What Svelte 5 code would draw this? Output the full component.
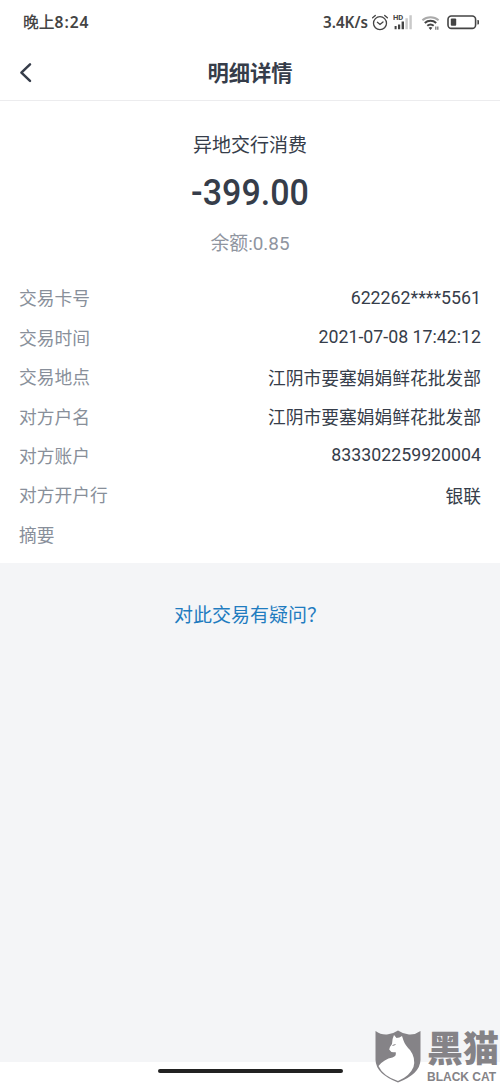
<script>
  const rows = [
    { label: '交易卡号', value: '622262****5561' },
    { label: '交易时间', value: '2021-07-08 17:42:12' },
    { label: '交易地点', value: '江阴市要塞娟娟鲜花批发部' },
    { label: '对方户名', value: '江阴市要塞娟娟鲜花批发部' },
    { label: '对方账户', value: '833302259920004' },
    { label: '对方开户行', value: '银联' },
    { label: '摘要', value: '' }
  ];
</script>

<div class="page">
  <div class="status">
    <div class="time">晚上<span>8:24</span></div>
    <div class="right">
      <span class="speed">3.4K/s</span>
      <svg class="alarm" width="18" height="18" viewBox="0 0 18 18" fill="none" stroke="#444" stroke-width="1.3" stroke-linecap="round">
        <circle cx="9" cy="9.2" r="6.5" />
        <path d="M1.6 3.8 4.3 1.5M16.4 3.8 13.7 1.5M6.4 8.3 9 10.5 12 7.9" />
      </svg>
      <svg class="signal" width="20" height="17" viewBox="0 0 20 17">
        <text x="0" y="6.3" font-size="7.6" font-weight="700" fill="#444">HD</text>
        <path d="M1.6 12h2v3.2h-2zM5 10.4h2.2v4.8H5zM8.6 7.6h2.4v7.6H8.6z" fill="#444" />
        <path d="M12.4 4.2h2.4v11h-2.4zM16.4 1.2h2.4v14h-2.4z" fill="#c9c9c9" />
      </svg>
      <svg class="wifi" width="20" height="16" viewBox="0 0 20 16" fill="none" stroke-width="2">
        <path d="M1.4 5.2a12.4 12.4 0 0 1 16.2 0" stroke="#aaa" />
        <path d="M3.8 8a8.6 8.6 0 0 1 11.4 0M6.3 10.8a5 5 0 0 1 6.4 0" stroke="#444" />
        <path d="M7.6 12.7 9.5 15l1.900-2.300a3 3 0 0 0-3.800 0z" fill="#444" stroke="none" />
        <path d="M14.800 11.600v3.200M16.800 11.600v3.200" stroke="#777" stroke-width="1.3" />
      </svg>
      <svg class="battery" width="33" height="15" viewBox="0 0 33 15">
        <rect x="1" y="1" width="27.6" height="12.4" rx="3.4" fill="none" stroke="#444" stroke-width="1.6" />
        <rect x="3.8" y="3.6" width="5.4" height="7.2" rx="1" fill="#444" />
        <path d="M30.4 5h.6q1 0 1 1v2.4q0 1-1 1h-.6z" fill="#444" />
      </svg>
    </div>
  </div>

  <header>
    <button class="back" aria-label="返回">
      <svg width="14" height="22" viewBox="0 0 14 22" fill="none" stroke="#363d4a" stroke-width="2.5" stroke-linecap="round" stroke-linejoin="round">
        <path d="M11 2.300 2.400 10.600 11 18.900" />
      </svg>
    </button>
    <h1>明细详情</h1>
  </header>

  <section class="summary">
    <div class="kind">异地交行消费</div>
    <div class="amount">-399.00</div>
    <div class="balance">余额:0.85</div>
  </section>

  <section class="details">
    {#each rows as row}
      <div class="row">
        <span class="label">{row.label}</span>
        <span class="value">{row.value}</span>
      </div>
    {/each}
  </section>

  <main>
    <a href="#question">对此交易有疑问？</a>
  </main>

  <footer><div class="home"></div></footer>

  <div class="watermark">
    <svg width="46" height="54" viewBox="0 0 46 54">
      <path d="M.5 1Q6 5 12 4.500 18 4 23 .5 28 4 34 4.500 40 5 45.500 1V30Q45 44 23 52.500 1 44 .5 30Z" fill="#858387" />
      <path d="M19 5 21.500 8Q24.500 8 27 6L28.500 10.500Q30 15 35 20 41 28 38.500 37 35 46 23 51 8 46 3.500 36 9 29 17.500 27.500 22 26 20.500 22 16 23 14.200 19.500 14.500 17 17 14 17 9 19 5Z" fill="#fff" />
      <path d="M17.500 15.500 20.500 14.500" stroke="#858387" stroke-width="1" />
    </svg>
    <div class="brand">
      <div class="cn">黑猫</div>
      <div class="en">BLACK CAT</div>
    </div>
  </div>
</div>

<style>
  :global(body) {
    margin: 0;
    background: #fff;
  }

  .page {
    position: relative;
    display: flex;
    flex-direction: column;
    width: 500px;
    height: 1083px;
    overflow: hidden;
    background: #fff;
    color: #363d4a;
    font-family: Roboto, 'Noto Sans CJK SC', sans-serif;
  }

  .status {
    display: flex;
    justify-content: space-between;
    align-items: center;
    box-sizing: border-box;
    height: 45px;
    padding: 0 20px 0 23px;
    color: #444;
  }

  .time {
    font-size: 15.8px;
    font-weight: 500;
    line-height: 20px;
  }

  .time span {
    font-family: 'Noto Sans', sans-serif;
    font-size: 15.6px;
    font-weight: 600;
    letter-spacing: 0.9px;
  }

  .right {
    display: flex;
    align-items: center;
  }

  .speed {
    margin: -2px 3px 0 0;
    font-family: 'Noto Sans', sans-serif;
    font-size: 15.2px;
    font-weight: 600;
    line-height: 20px;
  }

  .signal {
    margin-left: 4px;
  }

  .wifi {
    margin-left: 8px;
  }

  .battery {
    margin-left: 6px;
  }

  header {
    display: grid;
    grid-template-columns: 60px 1fr 60px;
    align-items: center;
    box-sizing: border-box;
    height: 56px;
    border-bottom: 1px solid #ececee;
  }

  .back {
    display: flex;
    padding: 0 0 0 19px;
    border: 0;
    background: none;
  }

  h1 {
    margin: 0;
    padding-top: 2px;
    font-size: 21.3px;
    font-weight: 700;
    line-height: 32px;
    text-align: center;
  }

  .summary {
    display: flex;
    flex-direction: column;
    align-items: center;
    padding-top: 31px;
  }

  .kind {
    font-size: 19px;
    line-height: 28px;
  }

  .amount {
    margin-top: 11px;
    font-size: 37px;
    font-weight: 500;
    line-height: 44px;
    transform: scaleX(0.92);
  }

  .balance {
    margin-top: 15px;
    color: #8f959f;
    font-size: 18.9px;
    line-height: 28px;
  }

  .details {
    padding: 20px 19px 9px;
  }

  .row {
    display: flex;
    justify-content: space-between;
    align-items: center;
    height: 39.45px;
    font-size: 17.75px;
  }

  .label {
    padding-bottom: 1px;
    color: #888f9a;
  }

  main {
    flex: 1;
    padding-top: 38px;
    background: #f4f5f7;
    text-align: center;
  }

  a {
    color: #1f7cc0;
    font-size: 19px;
    line-height: 30px;
    text-decoration: none;
  }

  footer {
    display: flex;
    justify-content: center;
    box-sizing: border-box;
    height: 21px;
    padding-top: 7px;
  }

  .home {
    width: 185px;
    height: 4px;
    border-radius: 2px;
    background: #222;
  }

  /* stamped over the page corner */
  .watermark {
    position: absolute;
    right: -3px;
    bottom: -1px;
    display: flex;
    gap: 6px;
    width: 128px;
    height: 54px;
    color: #858387;
  }

  .brand {
    white-space: nowrap;
  }

  .cn {
    font-size: 36px;
    font-weight: 900;
    line-height: 41px;
  }

  .en {
    font-family: 'Liberation Sans', sans-serif;
    font-size: 12px;
    font-weight: 700;
    line-height: 12px;
  }
</style>
